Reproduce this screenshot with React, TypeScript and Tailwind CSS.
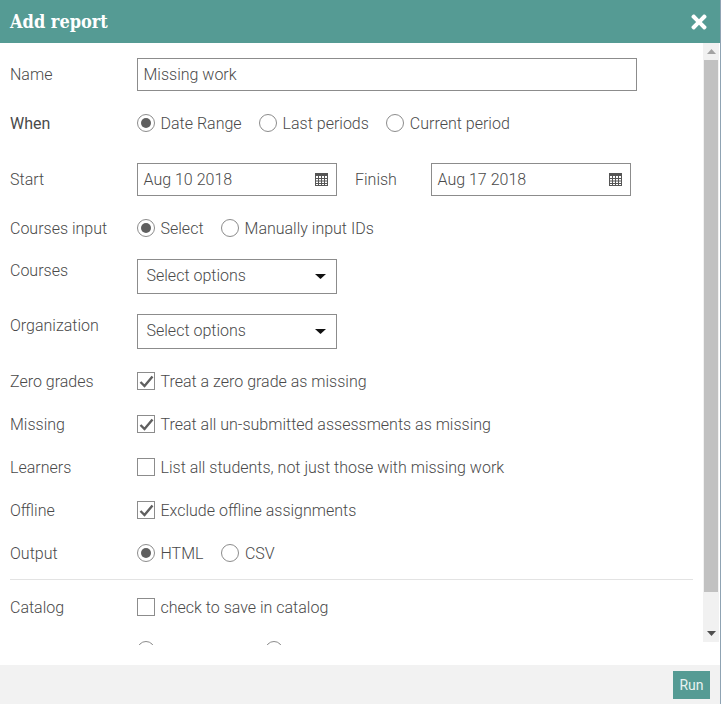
import React from "react";
import { FaTimes } from "react-icons/fa";

const Radio = ({ checked }: { checked?: boolean }) => (
  <span className="w-[18px] h-[18px] rounded-full border border-[#8c8c8c] flex items-center justify-center shrink-0 bg-white">
    {checked && <span className="w-[10px] h-[10px] rounded-full bg-[#5f5f5f]" />}
  </span>
);

const RadioOption = ({ label, checked, mr }: { label: string; checked?: boolean; mr: string }) => (
  <span className={`flex items-center ${mr}`}>
    <Radio checked={checked} />
    <span className="ml-[5.5px] mt-[2px]">{label}</span>
  </span>
);

const Checkbox = ({ checked, label }: { checked?: boolean; label: string }) => (
  <span className="flex items-center">
    <span className="w-[18px] h-[18px] border border-[#8c8c8c] flex items-center justify-center shrink-0">
      {checked && (
        <svg width="15" height="13" viewBox="0 0 15 13">
          <path d="M1.5 7 L5.5 11 L13.5 1.5" fill="none" stroke="#5f5f5f" strokeWidth="2.4" />
        </svg>
      )}
    </span>
    <span className="ml-[5.5px] mt-[2px]">{label}</span>
  </span>
);

const CalendarIcon = () => (
  <svg width="13" height="13" viewBox="0 0 13 13" className="shrink-0">
    <rect x="0.5" y="0.5" width="12" height="12" fill="none" stroke="#555" />
    <rect x="0" y="0" width="13" height="3" fill="#555" />
    <path d="M3.5 3V13M6.5 3V13M9.5 3V13M0 5.5H13M0 8H13M0 10.5H13" stroke="#555" strokeWidth="1" fill="none" />
  </svg>
);

const DateInput = ({ value }: { value: string }) => (
  <div className="w-[200px] h-[33px] border border-[#8c8c8c] flex items-center justify-between pl-[5.5px] pr-[8px]">
    <span>{value}</span>
    <CalendarIcon />
  </div>
);

const SelectBox = () => (
  <div className="w-[200px] h-[35px] border border-[#8c8c8c] flex items-center justify-between pl-[8.5px] pr-[10px]">
    <span className="-mt-[2px]">Select options</span>
    <svg width="11" height="5" viewBox="0 0 11 5" className="shrink-0">
      <polygon points="0,0 11,0 5.5,5" fill="#111" />
    </svg>
  </div>
);

const Label = ({ children, className }: { children: React.ReactNode; className?: string }) => (
  <div className={`w-[127px] shrink-0 ${className ?? ""}`}>{children}</div>
);

export default function App() {
  return (
    <div
      className="w-[721px] h-[704px] flex flex-col overflow-hidden bg-white border-r border-[#8fa3b3] text-[16px] font-light text-[#4a4a4a]"
      style={{ fontFamily: "Roboto, sans-serif" }}
    >
      <div className="h-[43px] shrink-0 bg-[#559b94] flex items-center justify-between pl-[10px] pr-[13px] text-white">
        <span className="text-[18px] font-bold" style={{ fontFamily: "'DejaVu Serif Condensed', 'DejaVu Serif', serif" }}>
          Add report
        </span>
        <FaTimes className="w-[16px] h-[22px] text-white" />
      </div>

      <div className="flex-1 flex min-h-0">
        <div className="flex-1 min-w-0 h-[602px] overflow-hidden pl-[10px] pr-[10px]">
          <div className="flex items-center mt-[15px] h-[33px]">
            <Label>Name</Label>
            <div className="w-[500px] h-[33px] border border-[#8c8c8c] flex items-center pl-[5.5px]">Missing work</div>
          </div>

          <div className="flex items-center mt-[21px] h-[22px]">
            <Label className="font-normal mt-[2px]">When</Label>
            <RadioOption label="Date Range" checked mr="mr-[17.5px]" />
            <RadioOption label="Last periods" mr="mr-[17.5px]" />
            <RadioOption label="Current period" mr="" />
          </div>

          <div className="flex items-center mt-[29px] h-[33px]">
            <Label>Start</Label>
            <DateInput value="Aug 10 2018" />
            <span className="w-[94px] pl-[18px]">Finish</span>
            <DateInput value="Aug 17 2018" />
          </div>

          <div className="flex items-center mt-[21px] h-[22px]">
            <Label className="mt-[2px]">Courses input</Label>
            <RadioOption label="Select" checked mr="mr-[17.5px]" />
            <RadioOption label="Manually input IDs" mr="" />
          </div>

          <div className="flex items-start mt-[20px] h-[35px]">
            <Label>Courses</Label>
            <SelectBox />
          </div>

          <div className="flex items-start mt-[20px] h-[35px]">
            <Label>Organization</Label>
            <SelectBox />
          </div>

          <div className="flex items-center mt-[21px] h-[22px]">
            <Label className="mt-[2px]">Zero grades</Label>
            <Checkbox checked label="Treat a zero grade as missing" />
          </div>

          <div className="flex items-center mt-[21px] h-[22px]">
            <Label className="mt-[2px]">Missing</Label>
            <Checkbox checked label="Treat all un-submitted assessments as missing" />
          </div>

          <div className="flex items-center mt-[21px] h-[22px]">
            <Label className="mt-[2px]">Learners</Label>
            <Checkbox label="List all students, not just those with missing work" />
          </div>

          <div className="flex items-center mt-[21px] h-[22px]">
            <Label className="mt-[2px]">Offline</Label>
            <Checkbox checked label="Exclude offline assignments" />
          </div>

          <div className="flex items-center mt-[21px] h-[22px]">
            <Label className="mt-[2px]">Output</Label>
            <RadioOption label="HTML" checked mr="mr-[18px]" />
            <RadioOption label="CSV" mr="" />
          </div>

          <div className="mt-[15px] h-px bg-[#e3e3e3]" />

          <div className="flex items-center mt-[16px] h-[22px]">
            <Label className="mt-[2px]">Catalog</Label>
            <Checkbox label="check to save in catalog" />
          </div>

          <div className="flex items-center mt-[21px] h-[22px] pl-[127px] gap-[110px]">
            <Radio />
            <Radio />
          </div>
        </div>

        <div className="w-[16px] h-[599px] shrink-0 bg-[#f1f1f1] flex flex-col items-center mr-px">
          <div className="h-[17px] flex items-center justify-center">
            <svg width="9" height="5" viewBox="0 0 9 5"><polygon points="4.5,0 9,5 0,5" fill="#a3a3a3" /></svg>
          </div>
          <div className="w-[14px] h-[532px] bg-[#c1c1c1]" />
          <div className="flex-1 flex items-end pb-[6px]">
            <svg width="9" height="5" viewBox="0 0 9 5"><polygon points="0,0 9,0 4.5,5" fill="#505050" /></svg>
          </div>
        </div>
      </div>

      <div className="h-[39px] shrink-0 bg-[#f2f2f2] flex items-start justify-end pt-[6px] pr-[10px]">
        <div className="w-[37px] h-[28px] bg-[#559b94] text-[#e8f3f1] text-[14px] font-normal flex items-center justify-center">Run</div>
      </div>
    </div>
  );
}
